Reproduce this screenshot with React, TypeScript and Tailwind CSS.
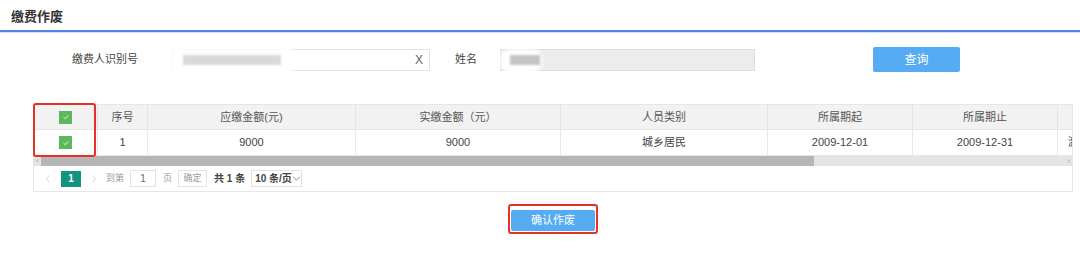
import React from "react";

const font = "font-['Liberation_Sans','Noto_Sans_CJK_SC',sans-serif]";

function Check() {
  return (
    <span className="flex h-[13px] w-[13px] items-center justify-center bg-[#5cb85c]">
      <svg viewBox="0 0 12 12" className="h-[10px] w-[10px]">
        <path d="M3 6.2 L5 8 L9 4" stroke="#e8f6e8" strokeWidth="1.2" fill="none" />
      </svg>
    </span>
  );
}

const cols = [
  { w: "w-[64px]", h: "", v: "" },
  { w: "w-[50px]", h: "序号", v: "1" },
  { w: "w-[208px]", h: "应缴金额(元)", v: "9000" },
  { w: "w-[205px]", h: "实缴金额（元）", v: "9000" },
  { w: "w-[207px]", h: "人员类别", v: "城乡居民" },
  { w: "w-[145px]", h: "所属期起", v: "2009-12-01" },
  { w: "w-[145px]", h: "所属期止", v: "2009-12-31" },
  { w: "w-[80px]", h: "", v: "激" },
];

export default function App() {
  return (
    <div className={`relative h-[274px] w-[1080px] overflow-hidden bg-white text-[#444] ${font}`}>
      <div className="flex h-[30px] items-center pl-[11px] pt-[4px] text-[13px] font-bold text-[#333]">缴费作废</div>
      <div className="h-[2px] bg-[#4f86e0]" />
      <div className="h-[1px] bg-[#cfe0f8]" />

      {/* search row */}
      <div className="mt-[14px] flex h-[25px] items-center text-[11px]">
        <span className="ml-[72px] w-[100px]">缴费人识别号</span>
        <div className="relative flex h-[22px] w-[258px] items-center border border-[#e2e2e2] bg-white">
          <div className="absolute -left-[2px] -top-[2px] h-[26px] w-[122px] bg-white blur-[2px]" />
          <div className="absolute left-[10px] top-[5px] h-[10px] w-[98px] bg-[#d9d9d9] blur-[1px]" />
          <span className="ml-auto mr-[6px] text-[12px] text-[#666]">X</span>
        </div>
        <span className="ml-[25px] w-[45px]">姓名</span>
        <div className="relative h-[22px] w-[255px] border border-[#dcdcdc] bg-[#ececec]">
          <div className="absolute -left-[1px] -top-[1px] h-[24px] w-[42px] rounded-[10px] bg-white blur-[2px]" />
          <div className="absolute left-[9px] top-[5px] h-[10px] w-[30px] bg-[#c4c4c4] blur-[1px]" />
        </div>
        <button className="ml-[118px] h-[25px] w-[87px] rounded-[2px] bg-[#55acf2] text-[12px] text-white">查询</button>
      </div>

      {/* table */}
      <div className="relative ml-[33px] mt-[32px] w-[1040px]">
        <div className="overflow-hidden border-x border-[#e6e6e6]">
          <div className="flex h-[26px] w-max border-y border-[#e6e6e6] bg-[#f2f2f2] text-[11px] text-[#555]">
            {cols.map((c, i) => (
              <div key={i} className={`flex items-center justify-center border-r border-[#e4e4e4] ${c.w}`}>
                {i === 0 ? <Check /> : c.h}
              </div>
            ))}
          </div>
          <div className="flex h-[26px] w-max border-b border-[#e6e6e6] bg-white text-[11px] text-[#444]">
            {cols.map((c, i) => (
              <div key={i} className={`flex items-center border-r border-[#e8e8e8] ${i === 7 ? "justify-start pl-[10px]" : "justify-center"} ${c.w}`}>
                {i === 0 ? <Check /> : c.v}
              </div>
            ))}
          </div>
          <div className="flex h-[10px] items-center bg-[#e4e4e4]">
            <span className="w-[7px] text-center text-[8px] leading-none text-[#999]">‹</span>
            <div className="h-[10px] w-[773px] bg-[#b6b6b6]" />
            <span className="ml-auto mr-[2px] text-[9px] leading-none text-[#aaa]">›</span>
          </div>
          <div className="flex h-[26px] items-center border-b border-[#e6e6e6] text-[10px] text-[#999]">
            <svg viewBox="0 0 8 12" className="ml-[11px] h-[10px] w-[6px]"><path d="M6 1 L2 6 L6 11" stroke="#ccc" fill="none" /></svg>
            <span className="ml-[10px] flex h-[16px] w-[20px] items-center justify-center bg-[#139481] text-[10px] font-bold text-white">1</span>
            <svg viewBox="0 0 8 12" className="ml-[10px] h-[10px] w-[6px]"><path d="M2 1 L6 6 L2 11" stroke="#ccc" fill="none" /></svg>
            <span className="ml-[9px] text-[9px]">到第</span>
            <span className="ml-[6px] flex h-[17px] w-[26px] items-center justify-center border border-[#e2e2e2] text-[#666]">1</span>
            <span className="ml-[7px] text-[9px]">页</span>
            <span className="ml-[6px] flex h-[17px] w-[29px] items-center justify-center border border-[#e2e2e2] text-[9px]">确定</span>
            <span className="ml-[7px] whitespace-nowrap font-bold text-[#444]">共 1 条</span>
            <span className="ml-[6px] flex h-[17px] w-[51px] items-center justify-between whitespace-nowrap border border-[#e2e2e2] pl-[3px] pr-[3px] font-bold text-[#444]">
              10 条/页
              <svg viewBox="0 0 10 6" className="h-[5px] w-[9px] shrink-0"><path d="M1 1 L5 5 L9 1" stroke="#777" fill="none" /></svg>
            </span>
          </div>
        </div>
        <div className="pointer-events-none absolute -top-[1px] left-0 h-[54px] w-[63px] rounded-[3px] border-2 border-[#e8302a]" />
      </div>

      {/* confirm */}
      <div className="mt-[12px] flex justify-center pl-[26px]">
        <div className="rounded-[3px] border-2 border-[#e8302a] p-[1px]">
          <button className="h-[21px] w-[84px] rounded-[2px] bg-[#55acf2] text-[11px] text-white">确认作废</button>
        </div>
      </div>
    </div>
  );
}
